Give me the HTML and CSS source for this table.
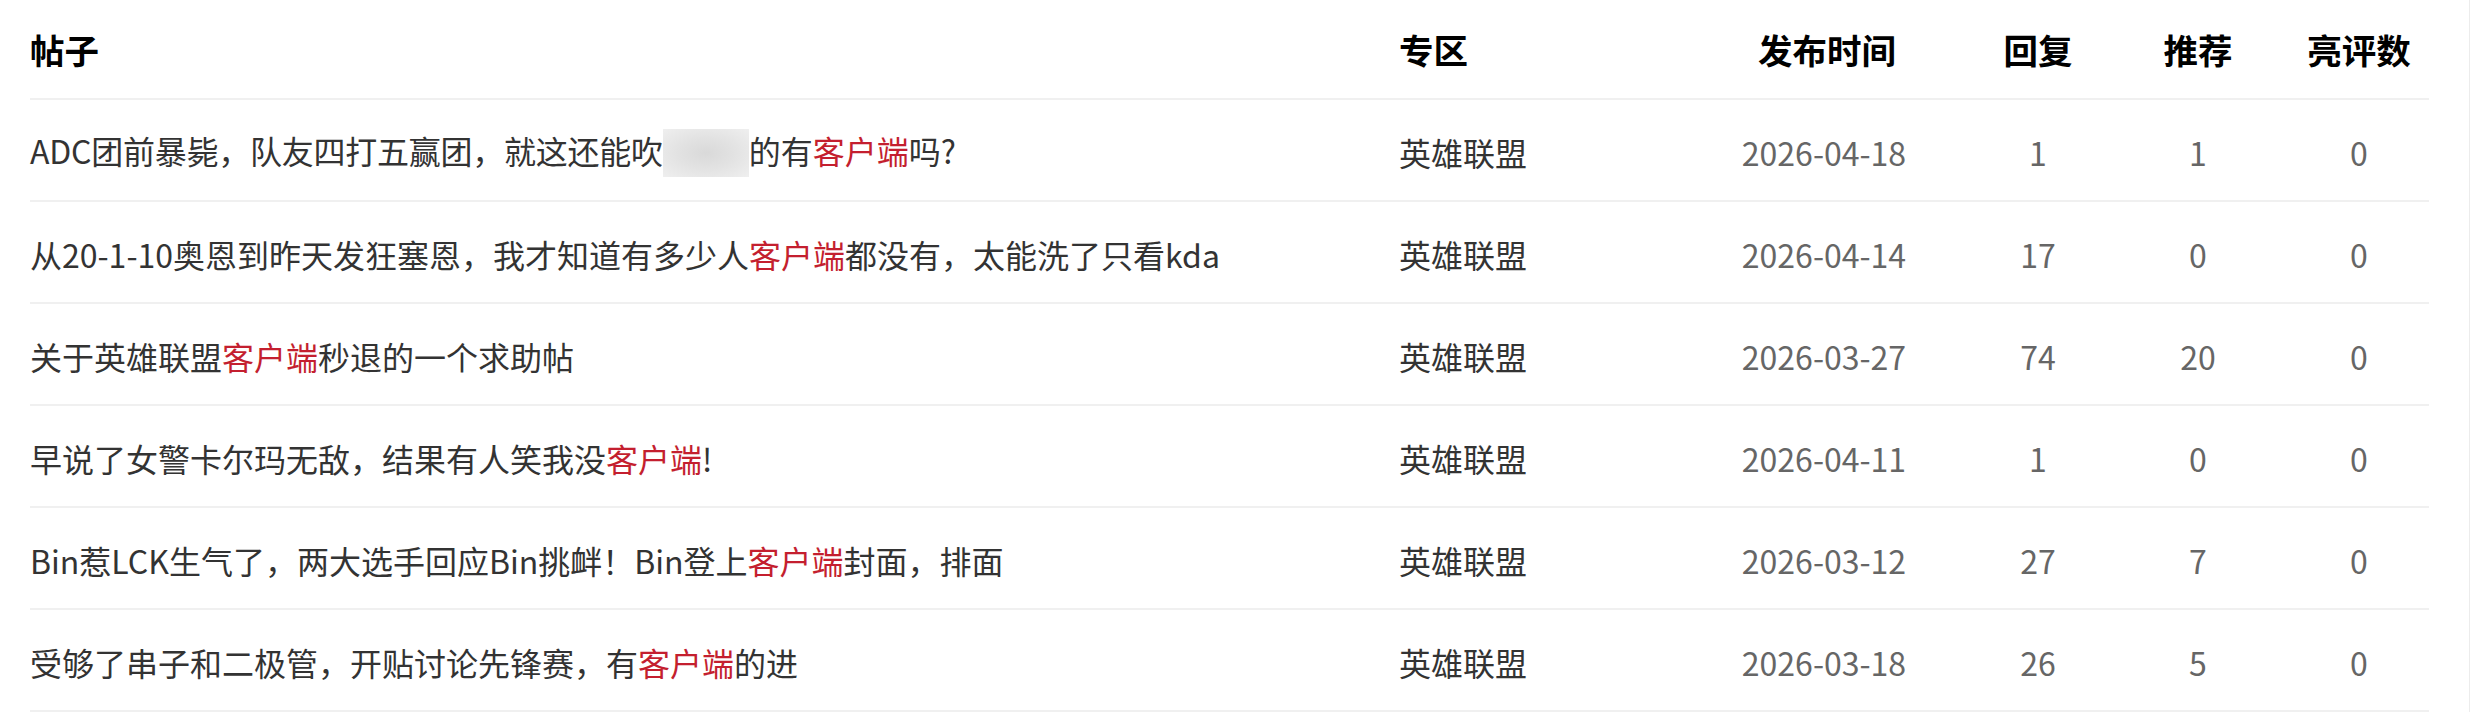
FILE: index.html
```html
<!DOCTYPE html>
<html lang="zh-CN">
<head>
<meta charset="utf-8">
<title>帖子</title>
<link rel="stylesheet" href="styles.css">
</head>
<body>
<div class="page">
  <div class="table">
    <div class="row head">
      <div class="c-title">帖子</div>
      <div class="c-zone">专区</div>
      <div class="c-center c-date">发布时间</div>
      <div class="c-center">回复</div>
      <div class="c-center">推荐</div>
      <div class="c-center c-last">亮评数</div>
    </div>
    <div class="row">
      <div class="c-title"><span class="tight">ADC团前暴毙，队友四打五赢团，就这还能吹</span><span class="blur"></span>的有<span class="hl">客户端</span>吗?</div>
      <div class="c-zone">英雄联盟</div>
      <div class="c-center num">2026-04-18</div>
      <div class="c-center num">1</div>
      <div class="c-center num">1</div>
      <div class="c-center num c-last">0</div>
    </div>
    <div class="row">
      <div class="c-title">从20-1-10奥恩到昨天发狂塞恩，我才知道有多少人<span class="hl">客户端</span>都没有，太能洗了只看kda</div>
      <div class="c-zone">英雄联盟</div>
      <div class="c-center num">2026-04-14</div>
      <div class="c-center num">17</div>
      <div class="c-center num">0</div>
      <div class="c-center num c-last">0</div>
    </div>
    <div class="row">
      <div class="c-title">关于英雄联盟<span class="hl">客户端</span>秒退的一个求助帖</div>
      <div class="c-zone">英雄联盟</div>
      <div class="c-center num">2026-03-27</div>
      <div class="c-center num">74</div>
      <div class="c-center num">20</div>
      <div class="c-center num c-last">0</div>
    </div>
    <div class="row">
      <div class="c-title">早说了女警卡尔玛无敌，结果有人笑我没<span class="hl">客户端</span>!</div>
      <div class="c-zone">英雄联盟</div>
      <div class="c-center num">2026-04-11</div>
      <div class="c-center num">1</div>
      <div class="c-center num">0</div>
      <div class="c-center num c-last">0</div>
    </div>
    <div class="row">
      <div class="c-title">Bin惹LCK生气了，两大选手回应Bin挑衅！Bin登上<span class="hl">客户端</span>封面，排面</div>
      <div class="c-zone">英雄联盟</div>
      <div class="c-center num">2026-03-12</div>
      <div class="c-center num">27</div>
      <div class="c-center num">7</div>
      <div class="c-center num c-last">0</div>
    </div>
    <div class="row">
      <div class="c-title">受够了串子和二极管，开贴讨论先锋赛，有<span class="hl">客户端</span>的进</div>
      <div class="c-zone">英雄联盟</div>
      <div class="c-center num">2026-03-18</div>
      <div class="c-center num">26</div>
      <div class="c-center num">5</div>
      <div class="c-center num c-last">0</div>
    </div>
  </div>
</div>
</body>
</html>
```
FILE: styles.css
```css
html, body {
  margin: 0;
  padding: 0;
  background: #fff;
}

body {
  font-family: "Noto Sans CJK SC", "Noto Sans", sans-serif;
  color: #333;
}

.page {
  box-sizing: border-box;
  width: 2470px;
  height: 712px;
  padding-left: 30px;
  border-right: 1px solid #ececec;
  overflow: hidden;
}

.table {
  width: 2399px;
}

.row {
  display: grid;
  grid-template-columns: 1369px 291px 268px 160px 160px 151px;
  align-items: center;
  height: 100px;
  border-bottom: 2px solid #f0f0f0;
  font-size: 32px;
  line-height: 1.4;
}

.row.head {
  height: 98px;
  font-size: 34.5px;
  font-weight: 700;
  color: #000;
}

.row:not(.head) > div {
  padding-top: 5px;
}

.c-title {
  white-space: nowrap;
  color: #333;
}

.head .c-title,
.head .c-zone,
.head .c-center {
  color: #000;
}

.head .c-date {
  padding-left: 6px;
}

.c-zone {
  color: #333;
}

.c-center {
  text-align: center;
}

.c-last {
  padding-left: 11px;
}

.num {
  color: #666;
}

.hl {
  color: #c41f2f;
}

.tight {
  letter-spacing: -0.25px;
}

.blur {
  display: inline-block;
  width: 86px;
  height: 48px;
  vertical-align: middle;
  margin-top: -6px;
  background: radial-gradient(ellipse at center, #d9d9d9 0%, #e2e2e2 45%, #efefef 100%);
}
```
